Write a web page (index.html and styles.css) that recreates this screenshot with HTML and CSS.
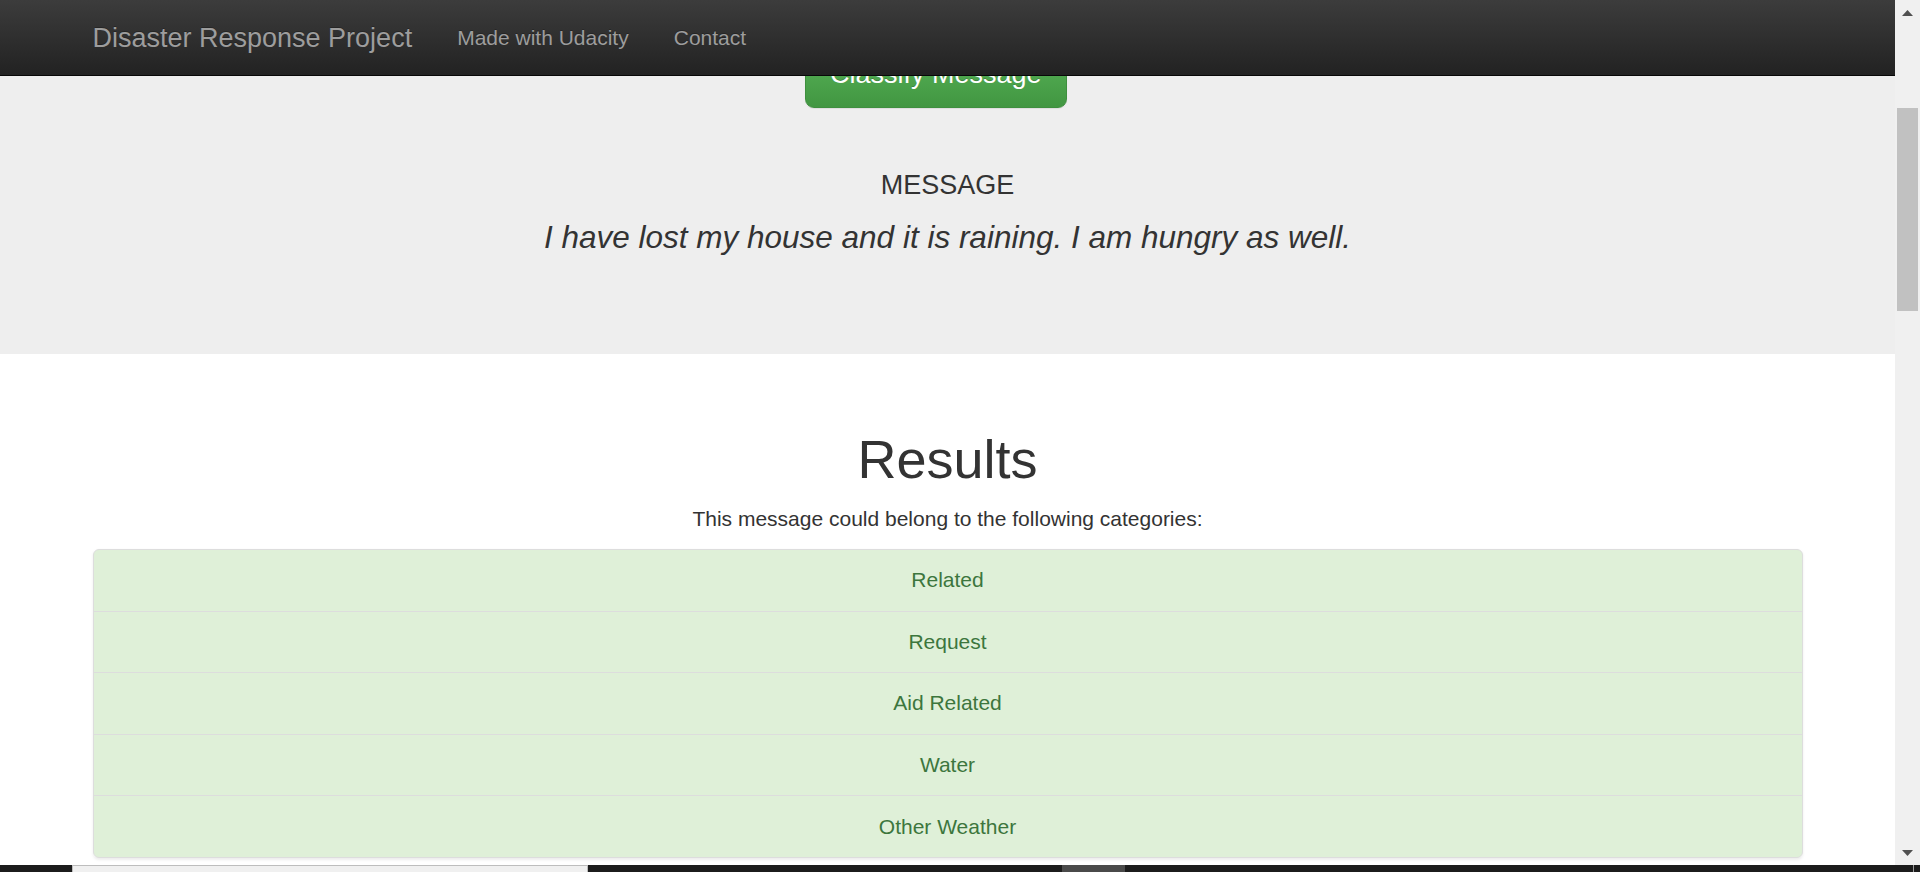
FILE: index.html
```html
<!DOCTYPE html>
<html lang="en">
<head>
<meta charset="utf-8">
<title>Disaster Response Project</title>
<link rel="stylesheet" href="styles.css">
</head>
<body>
<div class="screen">
  <div class="window">
    <div class="viewport">
      <nav class="navbar">
        <div class="container nav-inner">
          <a class="brand" href="#">Disaster Response Project</a>
          <ul class="nav">
            <li><a href="#">Made with Udacity</a></li>
            <li><a href="#">Contact</a></li>
          </ul>
        </div>
      </nav>

      <div class="jumbotron">
        <div class="container">
          <div class="btn-row"><button class="btn-success" type="button">Classify Message</button></div>
          <h4 class="msg-label">MESSAGE</h4>
          <p class="msg-text"><i>I have lost my house and it is raining. I am hungry as well.</i></p>
        </div>
      </div>

      <div class="container results">
        <h1 class="results-title">Results</h1>
        <p class="results-sub">This message could belong to the following categories:</p>
        <ul class="list-group">
          <li class="list-item">Related</li>
          <li class="list-item">Request</li>
          <li class="list-item">Aid Related</li>
          <li class="list-item">Water</li>
          <li class="list-item">Other Weather</li>
        </ul>
      </div>
    </div>

    <div class="scrollbar">
      <div class="sb-arrow">
        <svg width="11" height="6" viewBox="0 0 11 6"><polygon points="5.5,0 11,6 0,6" fill="#505050"/></svg>
      </div>
      <div class="sb-track"><div class="sb-thumb"></div></div>
      <div class="sb-arrow">
        <svg width="11" height="6" viewBox="0 0 11 6"><polygon points="0,0 11,0 5.5,6" fill="#505050"/></svg>
      </div>
    </div>
  </div>

  <div class="taskbar">
    <div></div>
    <div class="tb-light"></div>
    <div></div>
    <div class="tb-gray"></div>
    <div></div>
    <div class="tb-line"></div>
    <div></div>
  </div>
</div>
</body>
</html>
```

FILE: styles.css
```css
html, body {
  margin: 0;
  padding: 0;
}

body {
  font-family: "Liberation Sans", Arial, Helvetica, sans-serif;
  font-size: 21px;
  line-height: 30px;
  color: #333;
  background: #fff;
}

.screen {
  width: 1920px;
  height: 872px;
  display: flex;
  flex-direction: column;
  overflow: hidden;
}

.window {
  display: flex;
  height: 865px;
}

.viewport {
  flex: 1;
  position: relative;
  overflow: hidden;
  background: #fff;
}

.container {
  width: 1755px;
  margin: 0 auto;
  padding: 0 22.5px;
  box-sizing: border-box;
}

/* Navbar (fixed, overlays scrolled content) */
.navbar {
  position: absolute;
  top: 0;
  left: 0;
  right: 0;
  height: 75px;
  border-bottom: 1px solid #080808;
  background: linear-gradient(to bottom, #3c3c3c 0%, #222 100%);
  z-index: 10;
}

.nav-inner {
  display: flex;
  align-items: center;
  height: 75px;
}

.brand {
  margin-left: -22.5px;
  padding: 22.5px;
  font-size: 27px;
  line-height: 30px;
  color: #9d9d9d;
  text-decoration: none;
  text-shadow: 0 -1px 0 rgba(0, 0, 0, .25);
}

.nav {
  display: flex;
  list-style: none;
  margin: 0;
  padding: 0;
}

.nav a {
  display: block;
  padding: 22.5px;
  font-size: 21px;
  line-height: 30px;
  color: #9d9d9d;
  text-decoration: none;
  text-shadow: 0 -1px 0 rgba(0, 0, 0, .25);
}

/* Jumbotron */
.jumbotron {
  background: #eee;
  padding: 40px 0 72px;
  text-align: center;
}

.btn-row {
  text-align: left;
  padding-left: 41.6667%;
}

.btn-success {
  font-family: inherit;
  font-size: 27px;
  line-height: 36px;
  padding: 15px 24px;
  border: 1px solid #3e8f3e;
  border-radius: 9px;
  color: #fff;
  background: linear-gradient(to bottom, #5cb85c 0%, #419641 100%);
  text-shadow: 0 -1px 0 rgba(0, 0, 0, .2);
  box-shadow: inset 0 1px 0 rgba(255, 255, 255, .15), 0 1px 1px rgba(0, 0, 0, .075);
  display: inline-block;
}

.msg-label {
  margin: 62.5px 0 14.5px;
  font-size: 27px;
  line-height: 29.7px;
  font-weight: 500;
  color: #333;
}

.msg-text {
  margin: 0 0 22.3px;
  font-size: 31.5px;
  line-height: 45px;
  color: #333;
}

/* Results */
.results {
  text-align: center;
}

.results-title {
  margin: 75.5px 0 14.6px;
  font-size: 54px;
  line-height: 59.4px;
  font-weight: 500;
  color: #333;
}

.results-sub {
  margin: 0 0 15.5px;
  font-size: 21px;
  line-height: 30px;
}

.list-group {
  list-style: none;
  margin: 0;
  padding: 0;
  border-radius: 6px;
  box-shadow: 0 1.5px 3px rgba(0, 0, 0, .075);
}

.list-item {
  background: #dff0d8;
  color: #3c763d;
  border: 1px solid #ddd;
  margin-bottom: -1px;
  padding: 15.3px 22.5px;
  line-height: 30px;
  text-align: center;
}

.list-item:first-child {
  border-top-left-radius: 6px;
  border-top-right-radius: 6px;
}

.list-item:last-child {
  margin-bottom: 0;
  border-bottom-left-radius: 6px;
  border-bottom-right-radius: 6px;
}

/* Scrollbar */
.scrollbar {
  width: 25px;
  background: #f0f0f0;
  display: flex;
  flex-direction: column;
}

.sb-arrow {
  height: 25px;
  display: flex;
  align-items: center;
  justify-content: center;
}

.sb-arrow svg {
  display: block;
}

.sb-track {
  flex: 1;
  padding-top: 83px;
}

.sb-thumb {
  height: 203px;
  margin: 0 2px;
  background: #c1c1c1;
}

/* Taskbar strip */
.taskbar {
  height: 7px;
  background: #1c1c1c;
  display: grid;
  grid-template-columns: 72px 516px 474px 63px 788px 1px 1fr;
}

.tb-light {
  background: #f0f0f0;
  border: 1px solid #bdbdbd;
  border-width: 1px 1px 0;
}

.tb-gray {
  background: #4a4a4a;
}

.tb-line {
  background: #9a9a9a;
}
```
